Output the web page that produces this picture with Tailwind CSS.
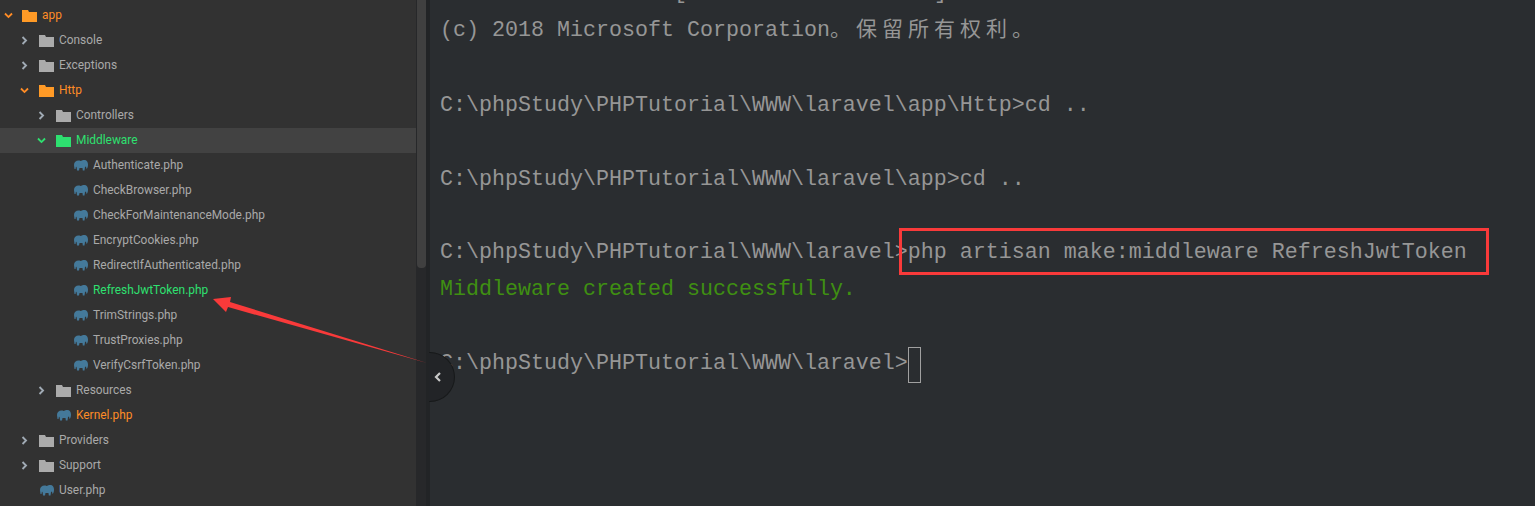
<!DOCTYPE html>
<html lang="zh">
<head>
    <meta charset="UTF-8">
    <title>Middleware</title>
    <script src="https://cdn.jsdelivr.net/npm/@tailwindcss/browser@4"></script>
</head>
<body class="bg-[#2a2d30]">
    <div class="relative flex h-[506px] w-[1535px] overflow-hidden">
        <!-- file tree -->
        <aside class="w-[416px] h-full pt-[3px] bg-[#323232] font-['Roboto','Noto_Sans',sans-serif] text-[11.9px] text-[#a9a9a9] overflow-hidden">
            <div class="flex items-center h-[25px] pl-[3px] text-[#ff8c26]">
                <svg class="w-[11px] h-[11px] mr-[8px]" viewBox="0 0 10 10"><path d="M1.800 3.200 5 6.400 8.200 3.200" fill="none" stroke="#ff8c26" stroke-width="1.700"/></svg>
                <svg class="w-[15px] h-[12px] mr-[5px]" viewBox="0 0 15 12"><path d="M0 0h6l1 2h8v10H0z" fill="#ff9a26"/></svg>
                <span>app</span>
            </div>
            <div class="flex items-center h-[25px] pl-[19px]">
                <svg class="w-[11px] h-[11px] mr-[9px]" viewBox="0 0 10 10"><path d="M3.200 1.800 6.400 5 3.200 8.200" fill="none" stroke="#a0aab4" stroke-width="1.700"/></svg>
                <svg class="w-[15px] h-[12px] mr-[5px]" viewBox="0 0 15 12"><path d="M0 0h6l1 2h8v10H0z" fill="#ababab"/></svg>
                <span>Console</span>
            </div>
            <div class="flex items-center h-[25px] pl-[19px]">
                <svg class="w-[11px] h-[11px] mr-[9px]" viewBox="0 0 10 10"><path d="M3.200 1.800 6.400 5 3.200 8.200" fill="none" stroke="#a0aab4" stroke-width="1.700"/></svg>
                <svg class="w-[15px] h-[12px] mr-[5px]" viewBox="0 0 15 12"><path d="M0 0h6l1 2h8v10H0z" fill="#ababab"/></svg>
                <span>Exceptions</span>
            </div>
            <div class="flex items-center h-[25px] pl-[19px] text-[#ff8c26]">
                <svg class="w-[11px] h-[11px] mr-[9px]" viewBox="0 0 10 10"><path d="M1.800 3.200 5 6.400 8.200 3.200" fill="none" stroke="#ff8c26" stroke-width="1.700"/></svg>
                <svg class="w-[15px] h-[12px] mr-[5px]" viewBox="0 0 15 12"><path d="M0 0h6l1 2h8v10H0z" fill="#ff9a26"/></svg>
                <span>Http</span>
            </div>
            <div class="flex items-center h-[25px] pl-[36px]">
                <svg class="w-[11px] h-[11px] mr-[9px]" viewBox="0 0 10 10"><path d="M3.200 1.800 6.400 5 3.200 8.200" fill="none" stroke="#a0aab4" stroke-width="1.700"/></svg>
                <svg class="w-[15px] h-[12px] mr-[5px]" viewBox="0 0 15 12"><path d="M0 0h6l1 2h8v10H0z" fill="#ababab"/></svg>
                <span>Controllers</span>
            </div>
            <div class="flex items-center h-[25px] pl-[36px] bg-[#424242] text-[#2ee070]">
                <svg class="w-[11px] h-[11px] mr-[9px]" viewBox="0 0 10 10"><path d="M1.800 3.200 5 6.400 8.200 3.200" fill="none" stroke="#2ee070" stroke-width="1.700"/></svg>
                <svg class="w-[15px] h-[12px] mr-[5px]" viewBox="0 0 15 12"><path d="M0 0h6l1 2h8v10H0z" fill="#2ee070"/></svg>
                <span>Middleware</span>
            </div>
            <div class="flex items-center h-[25px] pl-[74px]">
                <svg class="w-[14px] h-[11px] mr-[5px]" viewBox="0 0 14 11"><path d="M0 5C0 2 2 .5 4.500 .5 6 .5 6.500 1 7 1 8 .2 9 0 10.500 0 12.500 0 14 2 14 4.500c0 2-.5 4-1.500 4.500l-.5-2.500-1 .5-.5 3.500H8.800l-.3-2.500H5.500L5 10.500H3L2.700 7.500 2 6.500 1.500 9H.5z" fill="#44799a"/></svg>
                <span>Authenticate.php</span>
            </div>
            <div class="flex items-center h-[25px] pl-[74px]">
                <svg class="w-[14px] h-[11px] mr-[5px]" viewBox="0 0 14 11"><path d="M0 5C0 2 2 .5 4.500 .5 6 .5 6.500 1 7 1 8 .2 9 0 10.500 0 12.500 0 14 2 14 4.500c0 2-.5 4-1.500 4.500l-.5-2.500-1 .5-.5 3.500H8.800l-.3-2.500H5.500L5 10.500H3L2.700 7.500 2 6.500 1.500 9H.5z" fill="#44799a"/></svg>
                <span>CheckBrowser.php</span>
            </div>
            <div class="flex items-center h-[25px] pl-[74px]">
                <svg class="w-[14px] h-[11px] mr-[5px]" viewBox="0 0 14 11"><path d="M0 5C0 2 2 .5 4.500 .5 6 .5 6.500 1 7 1 8 .2 9 0 10.500 0 12.500 0 14 2 14 4.500c0 2-.5 4-1.500 4.500l-.5-2.500-1 .5-.5 3.500H8.800l-.3-2.500H5.500L5 10.500H3L2.700 7.500 2 6.500 1.500 9H.5z" fill="#44799a"/></svg>
                <span>CheckForMaintenanceMode.php</span>
            </div>
            <div class="flex items-center h-[25px] pl-[74px]">
                <svg class="w-[14px] h-[11px] mr-[5px]" viewBox="0 0 14 11"><path d="M0 5C0 2 2 .5 4.500 .5 6 .5 6.500 1 7 1 8 .2 9 0 10.500 0 12.500 0 14 2 14 4.500c0 2-.5 4-1.500 4.500l-.5-2.500-1 .5-.5 3.500H8.800l-.3-2.500H5.500L5 10.500H3L2.700 7.500 2 6.500 1.500 9H.5z" fill="#44799a"/></svg>
                <span>EncryptCookies.php</span>
            </div>
            <div class="flex items-center h-[25px] pl-[74px]">
                <svg class="w-[14px] h-[11px] mr-[5px]" viewBox="0 0 14 11"><path d="M0 5C0 2 2 .5 4.500 .5 6 .5 6.500 1 7 1 8 .2 9 0 10.500 0 12.500 0 14 2 14 4.500c0 2-.5 4-1.500 4.500l-.5-2.500-1 .5-.5 3.500H8.800l-.3-2.500H5.500L5 10.500H3L2.700 7.500 2 6.500 1.500 9H.5z" fill="#44799a"/></svg>
                <span>RedirectIfAuthenticated.php</span>
            </div>
            <div class="flex items-center h-[25px] pl-[74px] text-[#2ee070]">
                <svg class="w-[14px] h-[11px] mr-[5px]" viewBox="0 0 14 11"><path d="M0 5C0 2 2 .5 4.500 .5 6 .5 6.500 1 7 1 8 .2 9 0 10.500 0 12.500 0 14 2 14 4.500c0 2-.5 4-1.500 4.500l-.5-2.500-1 .5-.5 3.500H8.800l-.3-2.500H5.500L5 10.500H3L2.700 7.500 2 6.500 1.500 9H.5z" fill="#44799a"/></svg>
                <span>RefreshJwtToken.php</span>
            </div>
            <div class="flex items-center h-[25px] pl-[74px]">
                <svg class="w-[14px] h-[11px] mr-[5px]" viewBox="0 0 14 11"><path d="M0 5C0 2 2 .5 4.500 .5 6 .5 6.500 1 7 1 8 .2 9 0 10.500 0 12.500 0 14 2 14 4.500c0 2-.5 4-1.500 4.500l-.5-2.500-1 .5-.5 3.500H8.800l-.3-2.500H5.500L5 10.500H3L2.700 7.500 2 6.500 1.500 9H.5z" fill="#44799a"/></svg>
                <span>TrimStrings.php</span>
            </div>
            <div class="flex items-center h-[25px] pl-[74px]">
                <svg class="w-[14px] h-[11px] mr-[5px]" viewBox="0 0 14 11"><path d="M0 5C0 2 2 .5 4.500 .5 6 .5 6.500 1 7 1 8 .2 9 0 10.500 0 12.500 0 14 2 14 4.500c0 2-.5 4-1.500 4.500l-.5-2.500-1 .5-.5 3.500H8.800l-.3-2.500H5.500L5 10.500H3L2.700 7.500 2 6.500 1.500 9H.5z" fill="#44799a"/></svg>
                <span>TrustProxies.php</span>
            </div>
            <div class="flex items-center h-[25px] pl-[74px]">
                <svg class="w-[14px] h-[11px] mr-[5px]" viewBox="0 0 14 11"><path d="M0 5C0 2 2 .5 4.500 .5 6 .5 6.500 1 7 1 8 .2 9 0 10.500 0 12.500 0 14 2 14 4.500c0 2-.5 4-1.500 4.500l-.5-2.500-1 .5-.5 3.500H8.800l-.3-2.500H5.500L5 10.500H3L2.700 7.500 2 6.500 1.500 9H.5z" fill="#44799a"/></svg>
                <span>VerifyCsrfToken.php</span>
            </div>
            <div class="flex items-center h-[25px] pl-[36px]">
                <svg class="w-[11px] h-[11px] mr-[9px]" viewBox="0 0 10 10"><path d="M3.200 1.800 6.400 5 3.200 8.200" fill="none" stroke="#a0aab4" stroke-width="1.700"/></svg>
                <svg class="w-[15px] h-[12px] mr-[5px]" viewBox="0 0 15 12"><path d="M0 0h6l1 2h8v10H0z" fill="#ababab"/></svg>
                <span>Resources</span>
            </div>
            <div class="flex items-center h-[25px] pl-[57px] text-[#ff8c26]">
                <svg class="w-[14px] h-[11px] mr-[5px]" viewBox="0 0 14 11"><path d="M0 5C0 2 2 .5 4.500 .5 6 .5 6.500 1 7 1 8 .2 9 0 10.500 0 12.500 0 14 2 14 4.500c0 2-.5 4-1.500 4.500l-.5-2.500-1 .5-.5 3.500H8.800l-.3-2.500H5.500L5 10.500H3L2.700 7.500 2 6.500 1.500 9H.5z" fill="#44799a"/></svg>
                <span>Kernel.php</span>
            </div>
            <div class="flex items-center h-[25px] pl-[19px]">
                <svg class="w-[11px] h-[11px] mr-[9px]" viewBox="0 0 10 10"><path d="M3.200 1.800 6.400 5 3.200 8.200" fill="none" stroke="#a0aab4" stroke-width="1.700"/></svg>
                <svg class="w-[15px] h-[12px] mr-[5px]" viewBox="0 0 15 12"><path d="M0 0h6l1 2h8v10H0z" fill="#ababab"/></svg>
                <span>Providers</span>
            </div>
            <div class="flex items-center h-[25px] pl-[19px]">
                <svg class="w-[11px] h-[11px] mr-[9px]" viewBox="0 0 10 10"><path d="M3.200 1.800 6.400 5 3.200 8.200" fill="none" stroke="#a0aab4" stroke-width="1.700"/></svg>
                <svg class="w-[15px] h-[12px] mr-[5px]" viewBox="0 0 15 12"><path d="M0 0h6l1 2h8v10H0z" fill="#ababab"/></svg>
                <span>Support</span>
            </div>
            <div class="flex items-center h-[25px] pl-[40px]">
                <svg class="w-[14px] h-[11px] mr-[5px]" viewBox="0 0 14 11"><path d="M0 5C0 2 2 .5 4.500 .5 6 .5 6.500 1 7 1 8 .2 9 0 10.500 0 12.500 0 14 2 14 4.500c0 2-.5 4-1.500 4.500l-.5-2.500-1 .5-.5 3.500H8.800l-.3-2.500H5.500L5 10.500H3L2.700 7.500 2 6.500 1.500 9H.5z" fill="#44799a"/></svg>
                <span>User.php</span>
            </div>
        </aside>

        <!-- scrollbar -->
        <div class="flex w-[14px] h-full">
            <div class="w-[10px] h-full pl-px bg-[#27282a]">
                <div class="h-[268px] rounded-b-[4px] bg-[#404040]"></div>
            </div>
            <div class="w-[4px] h-full bg-[#222426]"></div>
        </div>

        <!-- terminal -->
        <main class="flex-1 -mt-[29px] pl-[10px] font-['Liberation_Mono','Noto_Sans_CJK_SC',monospace] text-[21.67px] leading-[36.9px] text-[#969696]">
            <div class="whitespace-pre">Microsoft Windows <span class="inline-block translate-y-[4px]">[</span><span class="inline-block translate-y-[4px] text-[20px] tracking-[6px]">版本</span> 10.0.17134.345<span class="inline-block translate-y-[4px]">]</span></div>
            <div class="mt-[5px] mb-px whitespace-pre">(c) 2018 Microsoft Corporation<span class="text-[21px] tracking-[5px]">。保留所有权利。</span></div>
            <div>&nbsp;</div>
            <div class="whitespace-pre">C:\phpStudy\PHPTutorial\WWW\laravel\app\Http&gt;cd ..</div>
            <div>&nbsp;</div>
            <div class="whitespace-pre">C:\phpStudy\PHPTutorial\WWW\laravel\app&gt;cd ..</div>
            <div>&nbsp;</div>
            <div class="whitespace-pre">C:\phpStudy\PHPTutorial\WWW\laravel&gt;php artisan make:middleware RefreshJwtToken</div>
            <div class="whitespace-pre text-[#3f8f12]">Middleware created successfully.</div>
            <div>&nbsp;</div>
            <div class="flex items-center whitespace-pre">C:\phpStudy\PHPTutorial\WWW\laravel&gt;<span class="w-[13px] h-[36px] border border-[#a0a0a0]"></span></div>
        </main>

        <!-- red box around the command -->
        <div class="absolute left-[899px] top-[228px] w-[590px] h-[47px] border-[3px] border-[#f93a3a]"></div>

        <!-- sidebar toggle -->
        <div class="absolute left-[429px] top-[352px] w-[26px] h-[50px] bg-[#222427] rounded-r-full border border-l-0 border-[#17191a] flex items-center pl-[4px]">
            <svg class="w-[10px] h-[12px]" viewBox="0 0 10 12"><path d="M7 2 3 6 7 10" fill="none" stroke="#c8c8c8" stroke-width="2.200"/></svg>
        </div>

        <!-- red arrow -->
        <svg class="absolute left-[210px] top-[290px] w-[225px] h-[80px]" viewBox="0 0 225 80">
            <path d="M3 9 21 7 20 12 217 73 18 17 16 22z" fill="#f93a3a"/>
        </svg>
    </div>
</body>
</html>
